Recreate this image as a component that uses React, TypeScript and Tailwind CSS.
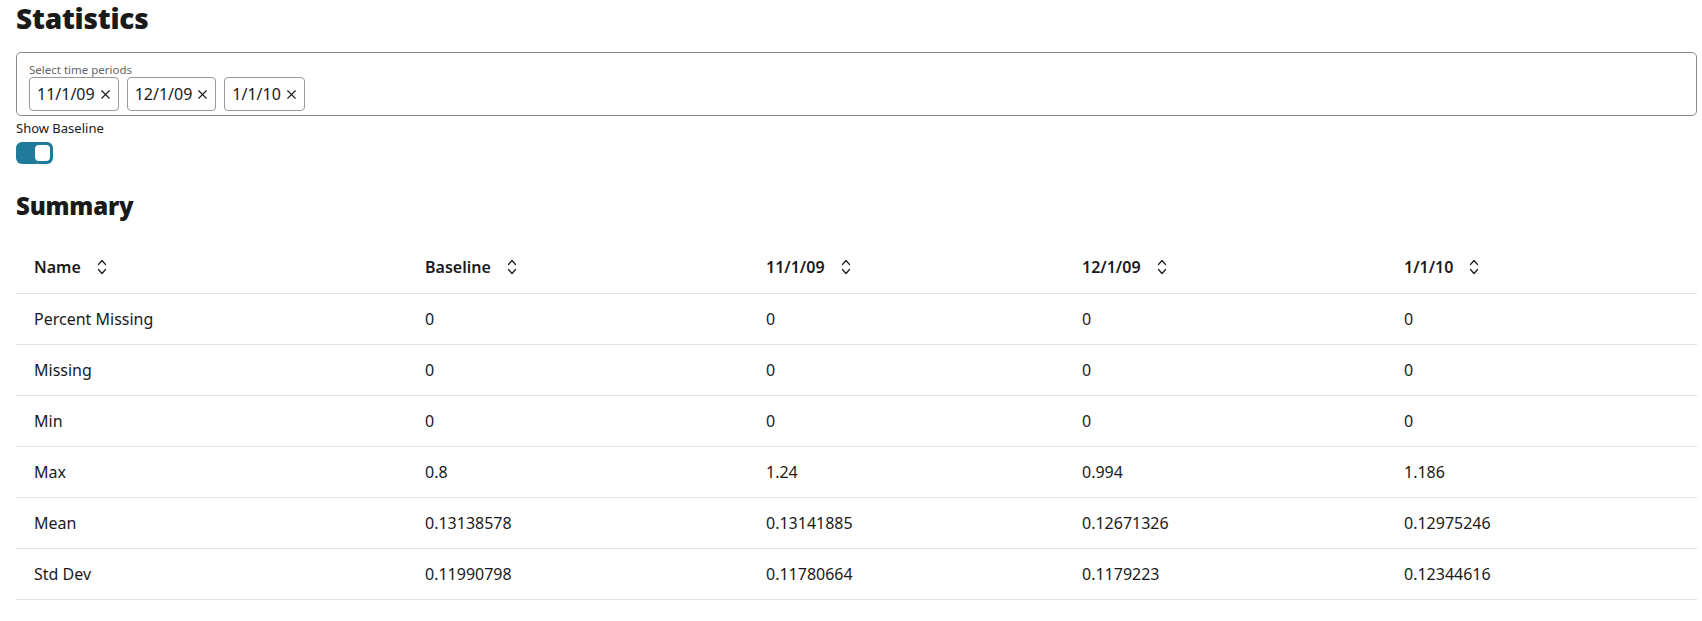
import { X } from 'lucide-react'

const periods = ['11/1/09', '12/1/09', '1/1/10']

const columns = [
  { label: 'Name', width: 'w-[391px]' },
  { label: 'Baseline', width: 'w-[341px]' },
  { label: '11/1/09', width: 'w-[316px]' },
  { label: '12/1/09', width: 'w-[322px]' },
  { label: '1/1/10', width: 'w-[311px]' },
]

const rows = [
  ['Percent Missing', '0', '0', '0', '0'],
  ['Missing', '0', '0', '0', '0'],
  ['Min', '0', '0', '0', '0'],
  ['Max', '0.8', '1.24', '0.994', '1.186'],
  ['Mean', '0.13138578', '0.13141885', '0.12671326', '0.12975246'],
  ['Std Dev', '0.11990798', '0.11780664', '0.1179223', '0.12344616'],
]

function SortIcon() {
  return (
    <svg width="12" height="18" viewBox="0 0 12 18" fill="none" stroke="#222" strokeWidth="1.3" strokeLinecap="round" strokeLinejoin="round">
      <path d="M2.5 6.5 L6 2.5 L9.5 6.5" />
      <path d="M2.5 11.5 L6 15.5 L9.5 11.5" />
    </svg>
  )
}

export default function App() {
  return (
    <div className="min-h-screen bg-white pl-4 pr-[5px] text-[#1a1a1a]" style={{ fontFamily: '"Noto Sans", "Open Sans", sans-serif' }}>
      <h1 className="text-[28px] leading-[36px] font-black tracking-[-0.2px]">Statistics</h1>

      <div className="mt-[16px] h-[64px] rounded-[5px] border border-[#8a8a8a] px-[12px] pt-[10px]">
        <div className="text-[11.5px] leading-[14px] text-[#666]">Select time periods</div>
        <div className="mt-[0px] flex gap-[8px]">
          {periods.map((p) => (
            <div key={p} className="flex h-[34px] items-center gap-[3px] rounded-[4px] border border-[#9a9a9a] pl-[7px] pr-[5px] text-[16px]">
              <span>{p}</span>
              <X className="h-[15px] w-[15px]" strokeWidth={1.8} />
            </div>
          ))}
        </div>
      </div>

      <div className="mt-[3px] text-[13px] leading-[18px]">Show Baseline</div>
      <div className="mt-[5px] flex h-[22px] w-[37px] items-center justify-end rounded-[6px] bg-[#207b9b] pr-[1px]">
        <div className="h-[20px] w-[19px] rounded-[6px] border-2 border-[#207b9b] bg-white" />
      </div>

      <h2 className="mt-[26px] text-[24px] leading-[32px] font-black tracking-[-0.2px]">Summary</h2>

      <table className="mt-[19px] w-full table-fixed border-collapse text-[16px]">
        <colgroup>
          {columns.map((c) => (
            <col key={c.label} className={c.width} />
          ))}
        </colgroup>
        <thead>
          <tr className="h-[52px] border-b border-[#e3e3e3]">
            {columns.map((c) => (
              <th key={c.label} className="px-[18px] text-left font-semibold">
                <div className="flex items-center gap-[15px]">
                  <span>{c.label}</span>
                  <SortIcon />
                </div>
              </th>
            ))}
          </tr>
        </thead>
        <tbody>
          {rows.map((r) => (
            <tr key={r[0]} className="h-[51px] border-b border-[#e3e3e3]">
              {r.map((v, i) => (
                <td key={i} className="px-[18px] text-left">
                  {v}
                </td>
              ))}
            </tr>
          ))}
        </tbody>
      </table>
    </div>
  )
}
